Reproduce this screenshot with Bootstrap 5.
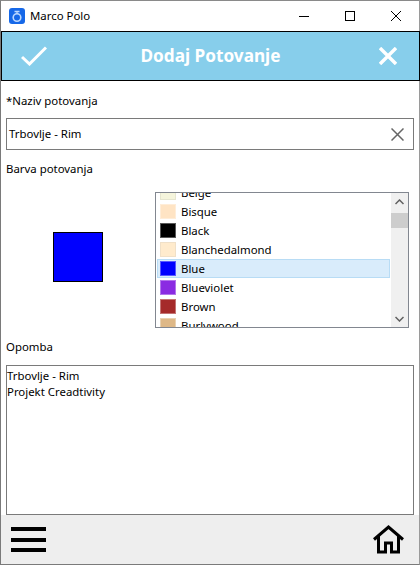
<!DOCTYPE html>
<html lang="sl">
  <head>
    <meta charset="UTF-8">
    <title>Marco Polo</title>
    <link rel="stylesheet" href="https://cdn.jsdelivr.net/npm/bootstrap@5.3.0/dist/css/bootstrap.min.css">
    <style>
      html, body { height: 565px; overflow: hidden; }
      body { font-family: "Noto Sans", "Open Sans", sans-serif; font-size: 11.4px; color: #000; background: #fff; }
      .win { width: 420px; height: 565px; border: 1px solid #7a7a7a; border-top-color: #8a8a8a; border-right-color: #9a9a9a; }
      .title-bar { height: 30px; padding-left: 8px; }
      .title-bar span { margin-left: 5px; line-height: 30px; }
      .win-btns { margin-left: auto; }
      .win-btn { width: 46px; height: 30px; display: flex; align-items: center; justify-content: center; }
      .head-bar { height: 50px; background: #87ceeb; border: 1px solid #000; margin: 0 -1px 0 0; padding: 0 22px 0 19px; }
      .head-bar h1 { font-size: 17.2px; font-weight: 700; color: #fff; margin: 0 5px 0 0; line-height: 1; }
      .form-area { padding: 0 5px; }
      .lbl { line-height: 16px; }
      .lbl-first { margin-top: 12px; }
      .lbl-next { margin-top: 11px; }
      .name-box { height: 32px; border: 1px solid #7a7a7a; padding: 0 9px 0 2px; margin-top: 9px; }
      .color-row { height: 136px; margin-top: 15px; }
      .preview-cell { width: 149px; }
      .preview { width: 50px; height: 50px; background: #0000ff; border: 1px solid #000; margin-left: 47px; margin-top: 40px; }
      .color-list { width: 254px; height: 136px; border: 1px solid #828790; overflow: hidden; }
      .color-items { flex: 1; margin-top: -10px; padding: 0 1px; border-radius: 0; }
      .color-item { height: 19px; flex-shrink: 0; padding: 0 3px 0 2px; border: 1px solid transparent; background: none; color: #000; line-height: 17px; }
      .list-group-item + .color-item { border-top-width: 1px; }
      .color-item.picked { background: #d9ecfb; border-color: #b8dcf5; }
      .swatch { width: 16px; height: 15px; margin-right: 5px; border: 1px solid rgba(255,255,255,.35); }
      .c-beige { background: #f5f5dc; border-color: #e6e6d0; }
      .c-bisque { background: #ffe4c4; }
      .c-black { background: #000; }
      .c-almond { background: #ffebcd; border-color: #f0e0c8; }
      .c-blue { background: #00f; }
      .c-violet { background: #8a2be2; }
      .c-brown { background: #a52a2a; }
      .c-wood { background: #deb887; }
      .scroll-bar { width: 17px; background: #f0f0f0; }
      .scroll-arrow { height: 17px; display: flex; align-items: center; justify-content: center; }
      .scroll-thumb { height: 15px; background: #cdcdcd; margin-top: 3px; }
      .note-box { height: 150px; border: 1px solid #7a7a7a; padding: 2px 0; margin-top: 10px; line-height: 16px; }
      .foot-bar { background: #eee; padding: 0 14px 0 10px; flex: 1; }
      .burger { width: 35px; }
      .burger i { display: block; height: 4px; background: #000; margin-bottom: 6.5px; }
      .burger i:last-child { margin-bottom: 0; }
    </style>
  </head>
  <body class="m-0">
    <div class="win d-flex flex-column">
      <!-- title bar -->
      <div class="title-bar d-flex align-items-center flex-shrink-0">
        <svg width="16" height="16" viewBox="0 0 16 16">
          <rect width="16" height="16" rx="3" fill="#1668e8"/>
          <circle cx="8" cy="9.5" r="3.8" fill="none" stroke="#bcd8ff" stroke-width="1.6"/>
          <path d="M5.5 3.5h5M8 3.5v2" stroke="#bcd8ff" stroke-width="1.3"/>
        </svg>
        <span>Marco Polo</span>
        <div class="win-btns d-flex">
          <div class="win-btn"><svg width="10" height="10"><path d="M0 5.5h10" stroke="#000"/></svg></div>
          <div class="win-btn"><svg width="10" height="10"><rect x=".5" y=".5" width="9" height="9" fill="none" stroke="#000"/></svg></div>
          <div class="win-btn"><svg width="10" height="10"><path d="M0 0l10 10M10 0L0 10" stroke="#000"/></svg></div>
        </div>
      </div>
      <!-- header -->
      <div class="head-bar d-flex align-items-center justify-content-between flex-shrink-0">
        <svg width="26" height="20" viewBox="0 0 26 20"><path d="M1 11l7.5 7L25 1.500" fill="none" stroke="#fff" stroke-width="3"/></svg>
        <h1>Dodaj Potovanje</h1>
        <svg width="18" height="18" viewBox="0 0 18 18"><path d="M1 1l16 16M17 1L1 17" fill="none" stroke="#fff" stroke-width="3.400"/></svg>
      </div>
      <!-- form -->
      <div class="form-area flex-shrink-0">
        <div class="lbl lbl-first">*Naziv potovanja</div>
        <div class="name-box d-flex align-items-center justify-content-between">
          <span>Trbovlje - Rim</span>
          <svg width="13" height="13" viewBox="0 0 13 13"><path d="M.5.5l12 12M12.500.5l-12 12" stroke="#666" stroke-width="1.500"/></svg>
        </div>
        <div class="lbl lbl-next">Barva potovanja</div>
        <div class="color-row d-flex">
          <div class="preview-cell"><div class="preview"></div></div>
          <div class="color-list d-flex">
            <div class="color-items list-group">
              <div class="color-item list-group-item d-flex align-items-center"><span class="swatch c-beige"></span>Beige</div>
              <div class="color-item list-group-item d-flex align-items-center"><span class="swatch c-bisque"></span>Bisque</div>
              <div class="color-item list-group-item d-flex align-items-center"><span class="swatch c-black"></span>Black</div>
              <div class="color-item list-group-item d-flex align-items-center"><span class="swatch c-almond"></span>Blanchedalmond</div>
              <div class="color-item picked list-group-item d-flex align-items-center"><span class="swatch c-blue"></span>Blue</div>
              <div class="color-item list-group-item d-flex align-items-center"><span class="swatch c-violet"></span>Blueviolet</div>
              <div class="color-item list-group-item d-flex align-items-center"><span class="swatch c-brown"></span>Brown</div>
              <div class="color-item list-group-item d-flex align-items-center"><span class="swatch c-wood"></span>Burlywood</div>
            </div>
            <div class="scroll-bar d-flex flex-column">
              <div class="scroll-arrow"><svg width="9" height="6"><path d="M.5 5l4-4 4 4" fill="none" stroke="#606060" stroke-width="1.500"/></svg></div>
              <div class="scroll-thumb"></div>
              <div class="scroll-arrow mt-auto"><svg width="9" height="6"><path d="M.5 1l4 4 4-4" fill="none" stroke="#606060" stroke-width="1.500"/></svg></div>
            </div>
          </div>
        </div>
        <div class="lbl lbl-next">Opomba</div>
        <div class="note-box">Trbovlje - Rim<br>Projekt Creadtivity</div>
      </div>
      <!-- footer -->
      <div class="foot-bar d-flex align-items-center justify-content-between">
        <div class="burger"><i></i><i></i><i></i></div>
        <svg width="32" height="29" viewBox="0 0 32 29"><path d="M1 14.500L15.500 2 30 14.500M5.500 11v16h7v-9h6v9h7V11" fill="none" stroke="#000" stroke-width="3"/></svg>
      </div>
    </div>
  </body>
</html>
